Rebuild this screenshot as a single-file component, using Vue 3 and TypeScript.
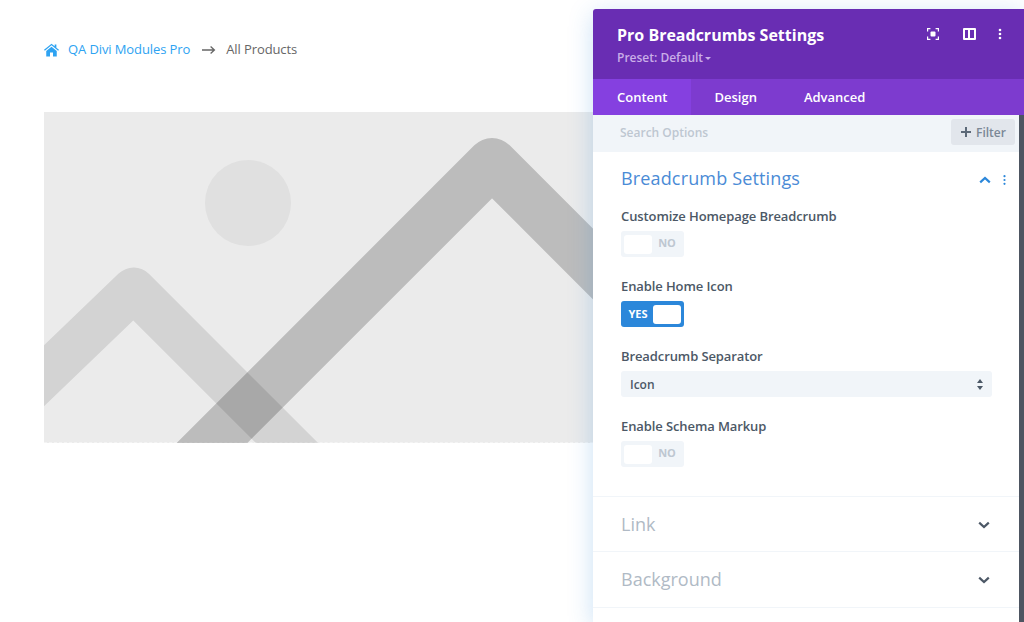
<script setup lang="ts">
// Pro Breadcrumbs settings modal over the module preview
interface Tab {
  label: string
  active?: boolean
}

const tabs: Tab[] = [
  { label: 'Content', active: true },
  { label: 'Design' },
  { label: 'Advanced' },
]

const closedGroups: string[] = ['Link', 'Background']
</script>

<template>
  <div class="page">
    <!-- Breadcrumb module -->
    <nav class="crumbs">
      <svg class="home" viewBox="0 0 16 14" width="15" height="14">
        <path d="M8 0.2 L11.4 3 V1.2 H13.2 V4.5 L16 6.8 L15.1 7.8 L8 2 L0.9 7.8 L0 6.8 Z" fill="#2ea3f2" />
        <path d="M8 3.4 L13.6 8 V14 H9.6 V9.6 H6.4 V14 H2.4 V8 Z" fill="#2ea3f2" />
      </svg>
      <a class="crumb-link">QA Divi Modules Pro</a>
      <svg class="sep" viewBox="0 0 14 10" width="14" height="10">
        <path d="M0 5 H12 M8.6 1.6 L12.4 5 L8.6 8.4" fill="none" stroke="#666" stroke-width="1.3" />
      </svg>
      <span class="crumb-current">All Products</span>
    </nav>

    <!-- Placeholder image -->
    <div class="preview">
      <svg class="placeholder" viewBox="0 0 980 331" width="980" height="331">
        <circle cx="204" cy="91" r="43" fill="#e0e0e0" />
        <path d="M-70 331 L89.6 177.6 L380 468" fill="none" stroke="#000" stroke-opacity="0.1" stroke-width="44" stroke-linejoin="round" />
        <path d="M118 381 L448 51 L800 403" fill="none" stroke="#000" stroke-opacity="0.2" stroke-width="50" stroke-linejoin="round" />
      </svg>
    </div>

    <!-- Settings modal -->
    <aside class="panel">
      <header class="panel-head">
        <div>
          <h1 class="panel-title">Pro Breadcrumbs Settings</h1>
          <p class="preset">Preset: Default <span class="caret"></span></p>
        </div>
        <div class="head-icons">
          <svg viewBox="0 0 12 12" width="12" height="12">
            <path d="M0.6 3.4 V0.6 H3.4 M8.6 0.6 H11.4 V3.4 M11.4 8.6 V11.4 H8.6 M3.4 11.4 H0.6 V8.6" fill="none" stroke="#fff" stroke-width="1.2" />
            <rect x="3.5" y="3.5" width="5" height="5" rx="1" fill="#fff" />
          </svg>
          <svg viewBox="0 0 13 12" width="13" height="12">
            <path d="M1 0 H12 A1 1 0 0 1 13 1 V11 A1 1 0 0 1 12 12 H1 A1 1 0 0 1 0 11 V1 A1 1 0 0 1 1 0 Z M2 2 V10 H5 V2 Z M7 2 V10 H11 V2 Z" fill="#fff" fill-rule="evenodd" />
          </svg>
          <svg class="dots" viewBox="0 0 4 12" width="4" height="12">
            <circle cx="2" cy="2" r="1.3" fill="#fff" />
            <circle cx="2" cy="6" r="1.3" fill="#fff" />
            <circle cx="2" cy="10" r="1.3" fill="#fff" />
          </svg>
        </div>
      </header>

      <div class="tabs">
        <button v-for="tab in tabs" :key="tab.label" class="tab" :class="{ active: tab.active }">
          {{ tab.label }}
        </button>
      </div>

      <div class="panel-body">
        <div class="search">
          <span class="search-text">Search Options</span>
          <button class="filter">
            <svg viewBox="0 0 10 10" width="10" height="10">
              <path d="M5 0 V10 M0 5 H10" stroke="#5c6978" stroke-width="2" />
            </svg>
            Filter
          </button>
        </div>

        <section class="group open">
          <div class="group-head">
            <h2 class="group-title">Breadcrumb Settings</h2>
            <svg class="chev" viewBox="0 0 12 8" width="12" height="8">
              <path d="M1.2 6.4 L6 2 L10.8 6.4" fill="none" stroke="#2b87da" stroke-width="2.2" />
            </svg>
            <svg class="group-dots" viewBox="0 0 3 10" width="3" height="10">
              <circle cx="1.5" cy="1.2" r="1.1" fill="#2b87da" />
              <circle cx="1.5" cy="5" r="1.1" fill="#2b87da" />
              <circle cx="1.5" cy="8.8" r="1.1" fill="#2b87da" />
            </svg>
          </div>

          <div class="field">
            <label class="field-label">Customize Homepage Breadcrumb</label>
            <div class="toggle">
              <span class="knob"></span>
              <span class="toggle-text">NO</span>
            </div>
          </div>

          <div class="field">
            <label class="field-label">Enable Home Icon</label>
            <div class="toggle on">
              <span class="toggle-text">YES</span>
              <span class="knob"></span>
            </div>
          </div>

          <div class="field">
            <label class="field-label">Breadcrumb Separator</label>
            <div class="select">
              <span>Icon</span>
              <svg viewBox="0 0 6 11" width="6" height="11">
                <path d="M3 0 L6 4 H0 Z M3 11 L0 7 H6 Z" fill="#4c5866" />
              </svg>
            </div>
          </div>

          <div class="field">
            <label class="field-label">Enable Schema Markup</label>
            <div class="toggle">
              <span class="knob"></span>
              <span class="toggle-text">NO</span>
            </div>
          </div>
        </section>

        <section v-for="name in closedGroups" :key="name" class="group closed">
          <h2 class="closed-title">{{ name }}</h2>
          <svg class="chev-down" viewBox="0 0 12 8" width="12" height="8">
            <path d="M1.2 1.6 L6 6 L10.8 1.6" fill="none" stroke="#4c5866" stroke-width="2.2" />
          </svg>
        </section>
      </div>
    </aside>
  </div>
</template>

<style>
html,
body {
  margin: 0;
  background: #fff;
}
</style>

<style scoped>
.page {
  position: relative;
  height: 622px;
  overflow: hidden;
  padding: 40px 0 0 44px;
  box-sizing: border-box;
  font-family: "Open Sans", "Liberation Sans", sans-serif;
}

/* Breadcrumbs */
.crumbs {
  display: flex;
  align-items: center;
  height: 18px;
  font-size: 13px;
  letter-spacing: -0.1px;
  line-height: 18px;
}

.home {
  margin: 1px 9px 0 0;
}

.crumb-link {
  color: #2ea3f2;
}

.sep {
  margin: 1px 10px 0 12px;
}

.crumb-current {
  color: #666;
}

/* Placeholder */
.preview {
  margin-top: 54px;
  height: 331px;
  background: #ebebeb;
  border-bottom: 1px dashed #f4f4f4;
  box-sizing: border-box;
}

.placeholder {
  display: block;
}

/* Modal */
.panel {
  position: absolute;
  top: 9px;
  left: 593px;
  width: 431px;
  height: 613px;
  display: flex;
  flex-direction: column;
  border-radius: 3px 0 0 0;
  box-shadow: 0 5px 24px rgba(43, 135, 218, 0.25);
}

.panel-head {
  height: 70px;
  flex: none;
  box-sizing: border-box;
  padding: 15px 22px 0 24px;
  display: flex;
  justify-content: space-between;
  align-items: flex-start;
  background: #692db3;
  border-radius: 3px 0 0 0;
}

.panel-title {
  margin: 0;
  font-size: 16px;
  line-height: 22px;
  font-weight: 700;
  color: #fff;
}

.preset {
  margin: 4px 0 0;
  font-size: 12px;
  line-height: 16px;
  font-weight: 600;
  color: #c9aee8;
}

.caret {
  display: inline-block;
  margin-left: -1px;
  vertical-align: 2px;
  border: 3px solid transparent;
  border-top-color: #c9aee8;
  border-bottom: 0;
}

.head-icons {
  display: flex;
  align-items: center;
  padding-top: 4px;
}

.head-icons svg:nth-child(1) {
  margin-right: 24px;
}

.head-icons svg:nth-child(2) {
  margin-right: 22px;
}

.tabs {
  height: 36px;
  flex: none;
  display: flex;
  background: #7d3bcf;
}

.tab {
  padding: 0 24px 0 23px;
  border: 0;
  background: none;
  font: 600 13px/32px "Open Sans", "Liberation Sans", sans-serif;
  color: #fff;
}

.tab.active {
  padding: 0 24px;
  background: #8540e0;
}

.panel-body {
  flex: 1;
  background: #fff;
  border-right: 5px solid #4d5561;
}

.search {
  height: 37px;
  box-sizing: border-box;
  padding: 4px 4px 0 27px;
  display: flex;
  align-items: flex-start;
  justify-content: space-between;
  background: #f1f5f9;
}

.search-text {
  margin-top: 5px;
  font-size: 12px;
  line-height: 17px;
  font-weight: 600;
  color: #bec7d1;
}

.filter {
  display: flex;
  align-items: center;
  gap: 5px;
  width: 64px;
  height: 26px;
  padding: 0 0 0 10px;
  border: 0;
  border-radius: 3px;
  background: #e2e6ec;
  font: 600 12px "Open Sans", "Liberation Sans", sans-serif;
  color: #7b8896;
}

.group {
  border-bottom: 1px solid #f1f5f9;
}

.group.open {
  height: 345px;
  box-sizing: border-box;
  padding: 0 27px 0 28px;
}

.group-head {
  position: relative;
  height: 55px;
  display: flex;
  align-items: center;
}

.group-title {
  margin: 0 0 4px;
  font-size: 18px;
  letter-spacing: 0.15px;
  font-weight: 400;
  color: #4a8bd6;
}

.chev {
  position: absolute;
  left: 358px;
  top: 24px;
}

.group-dots {
  position: absolute;
  left: 382px;
  top: 23px;
}

.field {
  margin-bottom: 20px;
}

.field-label {
  display: block;
  font-size: 13px;
  letter-spacing: -0.1px;
  line-height: 18px;
  font-weight: 600;
  color: #4c5866;
}

.toggle {
  margin-top: 6px;
  width: 63px;
  height: 26px;
  box-sizing: border-box;
  padding: 3px;
  display: flex;
  align-items: center;
  justify-content: space-between;
  border-radius: 3px;
  background: #f1f5f9;
}

.knob {
  width: 28px;
  height: 19px;
  border-radius: 3px;
  background: #fff;
}

.toggle-text {
  flex: 1;
  margin: 0 0 3px 1px;
  text-align: center;
  font-size: 11px;
  font-weight: 700;
  color: #bec7d1;
}

.toggle.on {
  background: #2b87da;
}

.toggle.on .toggle-text {
  margin: 0 1px 2px 0;
  color: #fff;
}

.select {
  margin-top: 6px;
  width: 371px;
  height: 26px;
  box-sizing: border-box;
  padding: 0 9px;
  display: flex;
  align-items: center;
  justify-content: space-between;
  border-radius: 3px;
  background: #f1f5f9;
  font-size: 12px;
  font-weight: 600;
  color: #4c5866;
}

.group.closed {
  height: 55px;
  box-sizing: border-box;
  padding: 0 29px 0 28px;
  display: flex;
  align-items: center;
  justify-content: space-between;
}

.group.closed:last-child {
  height: 56px;
  padding-bottom: 2px;
}

.chev-down {
  margin-top: 2px;
}

.closed-title {
  margin: 0;
  font-size: 18px;
  font-weight: 400;
  color: #b0bac5;
}
</style>
